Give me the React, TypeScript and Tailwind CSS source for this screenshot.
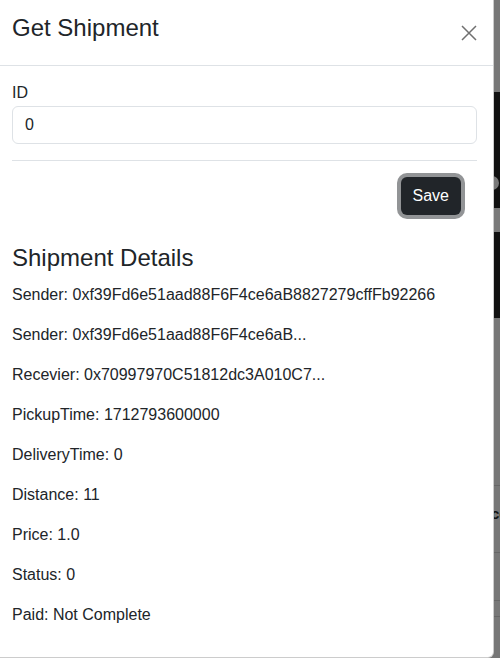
import React from 'react';

const details = [
  'Sender: 0xf39Fd6e51aad88F6F4ce6aB8827279cffFb92266',
  'Sender: 0xf39Fd6e51aad88F6F4ce6aB...',
  'Recevier: 0x70997970C51812dc3A010C7...',
  'PickupTime: 1712793600000',
  'DeliveryTime: 0',
  'Distance: 11',
  'Price: 1.0',
  'Status: 0',
  'Paid: Not Complete',
];

const CloseIcon = () => (
  <svg width="16" height="16" viewBox="0 0 16 16" fill="none" stroke="#707070" strokeWidth="1.5">
    <path d="M1 1L15 15M15 1L1 15" />
  </svg>
);

export default function App() {
  return (
    <div className="flex h-[658px] w-[500px] overflow-hidden bg-[#777] text-[#212529] font-['Liberation_Sans',Arial,sans-serif]">
      {/* Modal */}
      <div className="h-[658px] w-[494px] shrink-0 rounded-br-md border-r border-b border-black/20 bg-white">
        <div className="flex h-[66px] items-center justify-between border-b border-[#dee2e6] pl-3 pr-4">
          <h1 className="mb-2 text-[24px] leading-[28.8px]">Get Shipment</h1>
          <button className="flex h-4 w-4 items-center justify-center">
            <CloseIcon />
          </button>
        </div>

        <div className="pl-3 pr-4 pt-[15px]">
          <label className="block text-base leading-6">ID</label>
          <div className="mt-px flex h-[38px] items-center rounded-md border border-[#dee2e6] px-3 text-base">
            0
          </div>
          <hr className="my-4 border-[#dee2e6]" />

          <div className="flex justify-end pr-4">
            <button className="h-[38px] rounded-md bg-[#212529] px-3 text-base text-white ring-4 ring-[#929496]">
              Save
            </button>
          </div>

          <h3 className="mt-[29px] mb-[10px] text-[24px] leading-[28.8px]">Shipment Details</h3>
          {details.map((d, i) => (
            <p key={i} className="mb-4 text-base leading-6">
              {d}
            </p>
          ))}
        </div>
      </div>

      {/* Backdrop strip showing page behind */}
      <div className="flex w-[6px] shrink-0 flex-col overflow-hidden">
        <div className="h-[92px] bg-[#777]" />
        <div className="relative h-[116px] bg-[#111]">
          <div className="absolute left-[-9px] top-[84px] h-[14px] w-[14px] rounded-full bg-[#7a7a7a]" />
        </div>
        <div className="h-[24px] bg-[#7a7a7a]" />
        <div className="h-[86px] bg-[#111]" />
        <div className="h-[167px] bg-[#777]" />
        <div className="h-px bg-[#666]" />
        <div className="flex h-[66px] items-start bg-[#777] pt-[20px]">
          <span className="ml-[-3px] text-[15px] font-bold leading-none text-[#111]">ce</span>
        </div>
        <div className="h-px bg-[#666]" />
        <div className="h-[47px] bg-[#777]" />
        <div className="h-px bg-[#666]" />
        <div className="h-[15px] bg-[#777]" />
        <div className="h-px bg-[#666]" />
        <div className="flex-1 bg-[#777]" />
      </div>
    </div>
  );
}
